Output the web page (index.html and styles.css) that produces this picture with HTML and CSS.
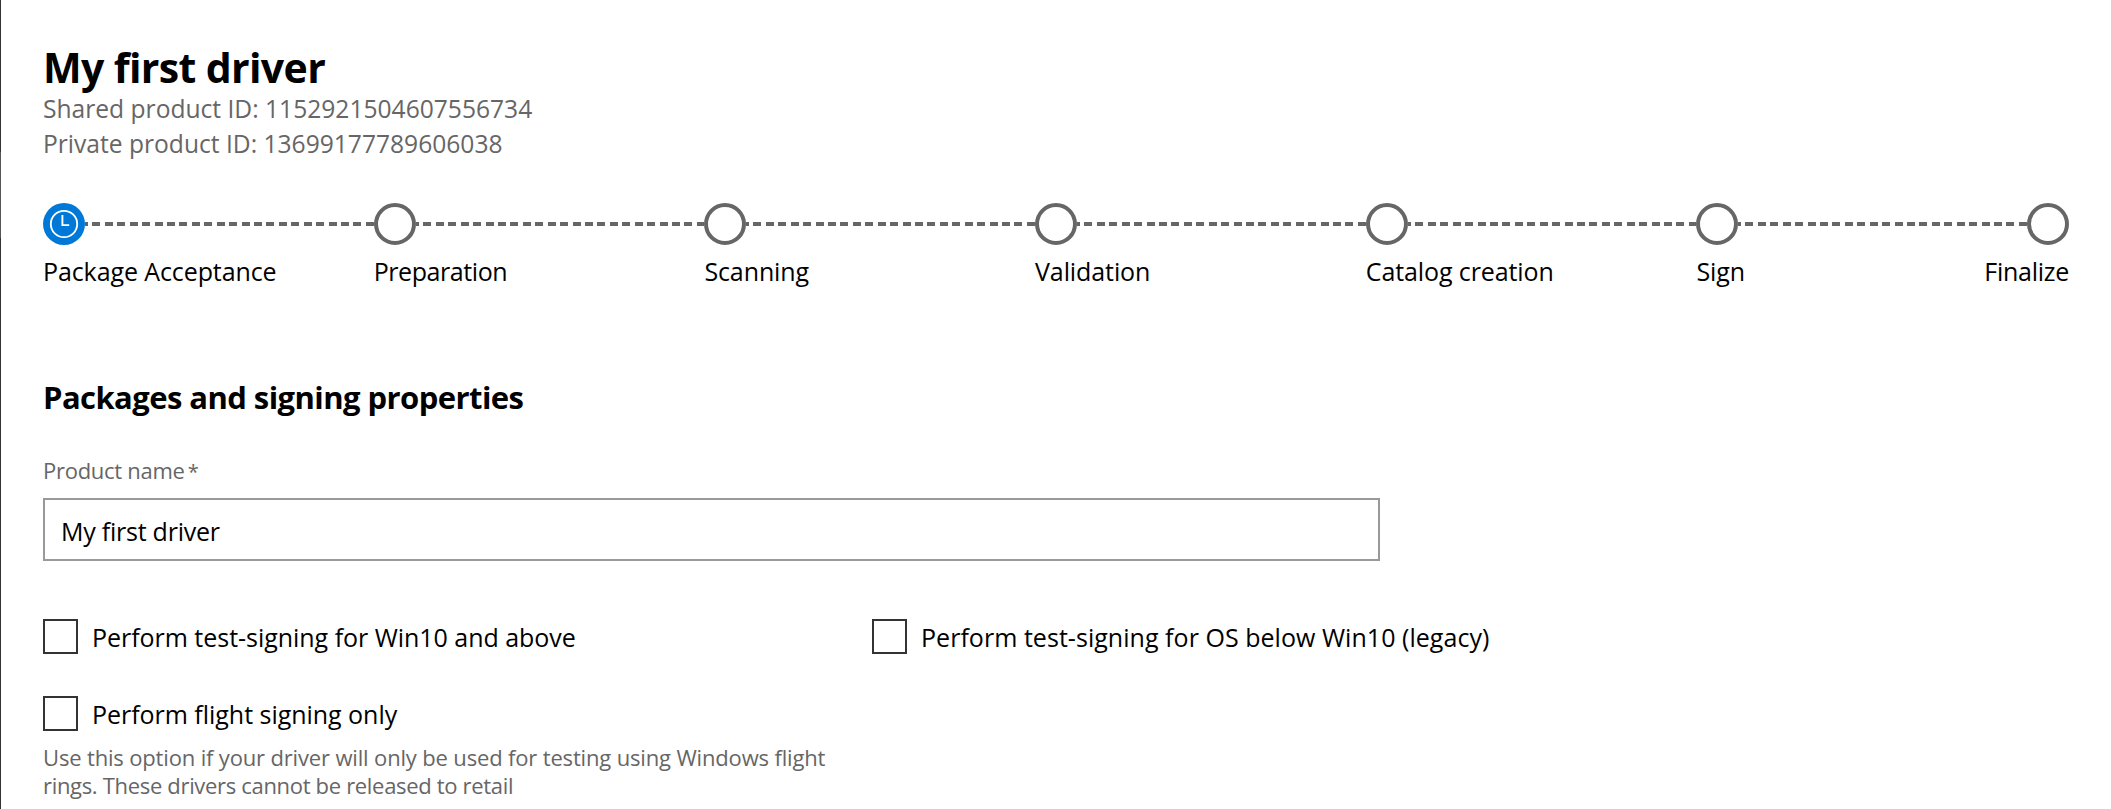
FILE: index.html
```html
<!DOCTYPE html>
<html lang="en">
<head>
<meta charset="utf-8">
<title>My first driver</title>
<link rel="stylesheet" href="styles.css">
</head>
<body>
<main class="page">
  <header class="product">
    <h1 class="title">My first driver</h1>
    <p class="product-id">Shared product ID: 1152921504607556734</p>
    <p class="product-id">Private product ID: 13699177789606038</p>
  </header>

  <ol class="steps">
    <li class="step active">
      <div class="track"><svg class="clock" viewBox="0 0 42 42"><circle cx="21" cy="21" r="21" fill="#0078d7"/><circle cx="21" cy="21" r="13.2" fill="none" stroke="#fff" stroke-width="1.8"/><path d="M19.4 12V22.1H26.2" fill="none" stroke="#fff" stroke-width="1.9"/></svg></div>
      <span class="label">Package Acceptance</span>
    </li>
    <li class="step"><div class="track"><i class="dot"></i></div><span class="label preparation">Preparation</span></li>
    <li class="step"><div class="track"><i class="dot"></i></div><span class="label">Scanning</span></li>
    <li class="step"><div class="track"><i class="dot"></i></div><span class="label">Validation</span></li>
    <li class="step"><div class="track"><i class="dot"></i></div><span class="label">Catalog creation</span></li>
    <li class="step"><div class="track"><i class="dot"></i></div><span class="label">Sign</span></li>
    <li class="step last"><div class="track"><i class="dot"></i></div><span class="label">Finalize</span></li>
  </ol>

  <section class="properties">
    <h2 class="heading">Packages and signing properties</h2>
    <div class="field-label">Product name<span class="required">*</span></div>
    <div class="input">My first driver</div>
    <div class="options">
      <div class="option"><i class="box"></i><span class="option-text">Perform test-signing for Win10 and above</span></div>
      <div class="option"><i class="box"></i><span class="option-text legacy">Perform test-signing for OS below Win10 (legacy)</span></div>
      <div class="option"><i class="box"></i><span class="option-text">Perform flight signing only</span></div>
    </div>
    <p class="help">Use this option if your driver will only be used for testing using Windows flight<br><span class="help-end">rings. These drivers cannot be released to retail</span></p>
  </section>
</main>
</body>
</html>
```
FILE: styles.css
```css
* { box-sizing: border-box; }
html, body { margin: 0; height: 100%; }
body {
  overflow: hidden;
  background: #fff;
  color: #000;
  font-family: "Open Sans", "Noto Sans", sans-serif;
  font-size: 25px;
}
h1, h2, p, ol { margin: 0; padding: 0; }
.page {
  height: 809px;
  padding: 40px 42px 0 42px;
  border-left: 1px solid;
  border-image: linear-gradient(#333 153px, #555 153px, #555 238px, #333 238px) 1;
}
.title { font-size: 41px; line-height: 54px; font-weight: 700; height: 51px; letter-spacing: -0.64px; }
.product-id { font-size: 24.6px; line-height: 35px; color: #666; white-space: nowrap; }
.steps { display: flex; list-style: none; margin-top: 42px; height: 97px; }
.step { width: 330.7px; flex: none; }
.step.last { width: 42px; display: flex; flex-direction: column; align-items: flex-end; }
.track { display: flex; align-items: center; height: 42px; }
.track::after {
  content: "";
  flex: 1;
  height: 4px;
  background: repeating-linear-gradient(90deg, #666 0 3px, transparent 3px 7.43px, #666 7.43px 12.43px);
}
.last .track::after { content: none; }
.dot { width: 42px; height: 42px; border: 4px solid #666; border-radius: 50%; }
.clock { width: 42px; height: 42px; }
.label { display: inline-block; line-height: 34px; margin-top: 9px; white-space: nowrap; letter-spacing: -0.1px; }
.preparation { letter-spacing: -0.42px; }
.last .label { letter-spacing: -0.25px; }
.properties { padding-top: 76px; }
.heading { font-size: 31px; line-height: 42px; font-weight: 700; letter-spacing: -0.56px; }
.field-label { margin-top: 37px; font-size: 22px; line-height: 30px; color: #666; letter-spacing: -0.27px; }
.required { margin-left: 3px; font-size: 20px; line-height: 1; }
.input { width: 1337px; height: 63px; margin-top: 13px; border: 2px solid #999; padding: 0 16px; line-height: 62px; letter-spacing: -0.24px; }
.options { display: grid; grid-template-columns: 829px 1fr; row-gap: 42px; margin-top: 58px; }
.option { display: flex; align-items: center; height: 35px; }
.box { width: 35px; height: 35px; border: 2px solid #333; margin-right: 14px; }
.option-text { line-height: 35px; padding-top: 2px; white-space: nowrap; letter-spacing: -0.03px; }
.legacy { letter-spacing: 0.04px; }
.help { margin-top: 12px; font-size: 22px; line-height: 28px; color: #666; white-space: nowrap; letter-spacing: -0.16px; }
.help-end { letter-spacing: -0.32px; }
```
